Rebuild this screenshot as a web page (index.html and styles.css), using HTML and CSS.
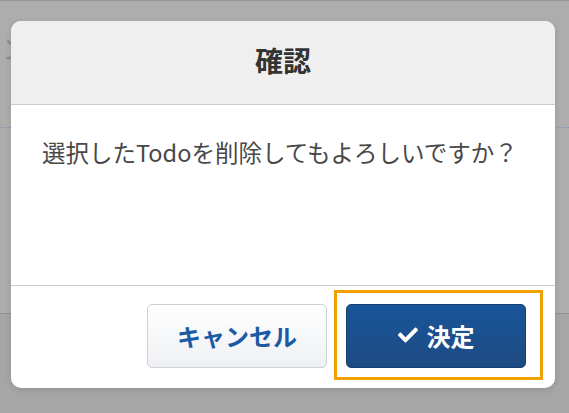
FILE: index.html
```html
<!DOCTYPE html>
<html lang="ja">
<head>
<meta charset="utf-8">
<title>確認</title>
<link rel="stylesheet" href="styles.css">
</head>
<body>
<div class="page">
  <div class="page-top">
    <span class="page-glyph">ン</span>
  </div>
  <div class="page-mid"></div>
  <div class="page-bottom"></div>
</div>

<div class="modal" role="dialog" aria-labelledby="modal-title">
  <div class="modal-header">
    <h1 class="modal-title" id="modal-title">確認</h1>
  </div>
  <div class="modal-body">
    <p class="modal-message">選択したTodoを削除してもよろしいですか？</p>
  </div>
  <div class="modal-footer">
    <button class="btn btn-cancel" type="button">キャンセル</button>
    <div class="focus-ring">
      <button class="btn btn-ok" type="button">
        <svg class="btn-icon" viewBox="0 0 512 512" aria-hidden="true"><path fill="#fff" d="M173.9 439.4l-166.4-166.4c-10-10-10-26.2 0-36.2l36.2-36.2c10-10 26.2-10 36.2 0L192 312.7 432.1 72.6c10-10 26.2-10 36.2 0l36.2 36.2c10 10 10 26.2 0 36.2l-294.4 294.4c-10 10-26.2 10-36.2 0z"/></svg>
        <span>決定</span>
      </button>
    </div>
  </div>
</div>
</body>
</html>
```

FILE: styles.css
```css
html, body {
  margin: 0;
  padding: 0;
}

body {
  width: 569px;
  height: 413px;
  overflow: hidden;
  background: #a7a7a7;
  font-family: "Noto Sans CJK JP", "Noto Sans", sans-serif;
  position: relative;
}

.page {
  display: flex;
  flex-direction: column;
}

.page-top {
  border-top: 1px solid #969696;
  border-bottom: 1px dotted #8a93a3;
  background: #adadad;
  box-sizing: border-box;
  height: 128px;
  padding: 34px 0 0 2px;
}

.page-glyph {
  font-size: 26px;
  color: #8a8a8a;
  line-height: 1;
}

.page-mid {
  height: 185px;
  background: #adadad;
  border-bottom: 1px solid #919191;
}

.page-bottom {
  height: 100px;
  background: #a6a6a6;
}

.modal {
  position: absolute;
  left: 11px;
  top: 21px;
  width: 544px;
  height: 367px;
  background: #fff;
  border-radius: 10px;
  overflow: hidden;
  display: flex;
  flex-direction: column;
  box-shadow: 0 2px 6px rgba(0, 0, 0, 0.12);
}

.modal-header {
  height: 84px;
  box-sizing: border-box;
  background: #efefef;
  border-bottom: 1px solid #cccccc;
  display: flex;
  align-items: center;
  justify-content: center;
  padding-bottom: 6px;
}

.modal-title {
  margin: 0;
  font-size: 28px;
  font-weight: 700;
  color: #333333;
  line-height: 1;
}

.modal-body {
  height: 181px;
  box-sizing: border-box;
  border-bottom: 1px solid #cccccc;
  padding: 30px 0 0 31px;
}

.modal-message {
  margin: 0;
  font-size: 23.5px;
  line-height: 35px;
  color: #484848;
  font-weight: 400;
}

.modal-footer {
  flex: 1;
  display: flex;
  justify-content: flex-end;
  align-items: flex-start;
  gap: 7px;
  padding: 4px 12px 0 0;
}

.btn {
  width: 180px;
  height: 64px;
  box-sizing: border-box;
  border-radius: 5px;
  font-family: "Noto Sans CJK JP", "Noto Sans", sans-serif;
  font-size: 24px;
  font-weight: 700;
  display: flex;
  align-items: center;
  justify-content: center;
  cursor: pointer;
  padding: 0 0 2px;
}

.btn-cancel {
  margin-top: 14px;
  background: linear-gradient(#ffffff, #eef0f3);
  border: 1px solid #cdd1d6;
  color: #1d5aa5;
}

.focus-ring {
  border: 3px solid #f0a000;
  padding: 11px 14px 9px 9px;
  padding-right: 14px;
}

.btn-ok {
  background: linear-gradient(#185599, #1e4b83);
  border: 1px solid #163f70;
  color: #ffffff;
  gap: 9px;
  outline: none;
}

.btn-icon {
  width: 20px;
  height: 20px;
  display: block;
}
```
